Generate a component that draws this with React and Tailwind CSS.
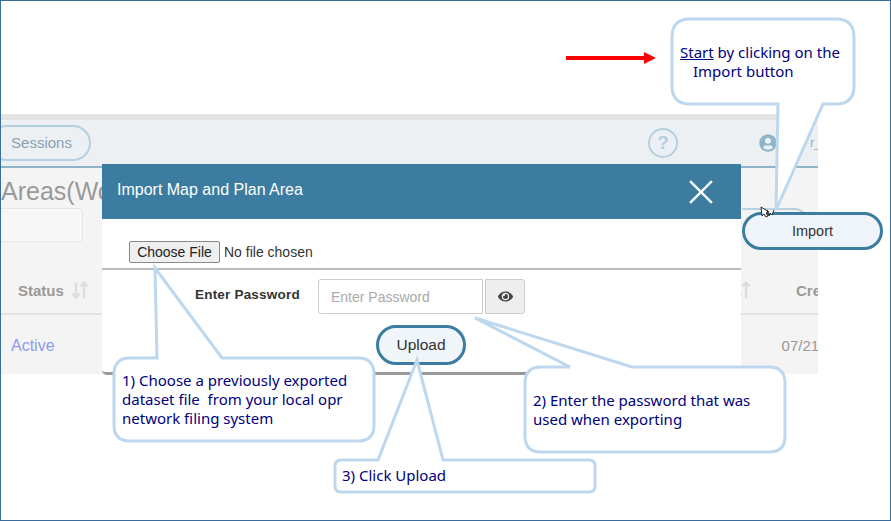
import React from "react";
import { FaEye, FaUserCircle } from "react-icons/fa";

const SortArrows = ({ className }) => (
  <svg viewBox="0 0 18 18" className={className} fill="none" stroke="currentColor" strokeWidth="2.4">
    <path d="M5 1v15M1.5 12.5 5 16.5l3.5-4" />
    <path d="M13 17V2M9.5 5.5 13 1.5l3.5 4" />
  </svg>
);

const CalloutText = ({ className, children }) => (
  <div className={`absolute z-30 font-['Noto_Sans',sans-serif] text-[15px] leading-[19px] text-[#000080] ${className}`}>
    {children}
  </div>
);

const BackgroundPage = () => (
  <div className="w-[817px] h-[260px] overflow-hidden flex flex-col bg-[#f4f4f4] text-[#999] font-['Liberation_Sans',sans-serif]">
    <div className="h-1.5 bg-[#e3e3e3] shrink-0" />
    <div className="h-[48px] shrink-0 flex items-center bg-[#edf0f3] border-b-2 border-[#8fb3c8]">
      <div className="-ml-[12px] w-[102px] h-[36px] shrink-0 flex items-center justify-center rounded-full border-2 border-[#b4cfe0] text-[15px] text-[#8ba0b0] pl-[3px] pt-[1px]">
        Sessions
      </div>
      <div className="ml-[557px] w-[30px] h-[30px] shrink-0 rounded-full border-2 border-[#b4cfe0] flex items-center justify-center text-[19px] font-bold text-[#b4cfe0]">
        ?
      </div>
      <FaUserCircle className="ml-[81px] shrink-0 text-[#8fb3c8]" size={18} />
      <span className="ml-[33px] text-[13px] text-[#8fb3c8]">r_</span>
    </div>
    <div className="pt-[7px] text-[25px] leading-[32px] text-[#999]">Areas(Wo</div>
    <div className="mt-[1px] -ml-2 w-[90px] h-[34px] bg-[#f7f7f7] border border-[#e6e6e6] rounded" />
    <div className="mt-[38px] h-[35px] flex items-start border-b-2 border-[#e3e3e3] text-[15px] font-bold">
      <span className="ml-[17px] w-[52px] shrink-0">Status</span>
      <SortArrows className="ml-[1px] mt-[1px] w-[18px] h-[18px] shrink-0 text-[#ddd]" />
      <SortArrows className="ml-[644px] mt-[1px] w-[18px] h-[18px] shrink-0 text-[#ddd]" />
      <span className="ml-[45px]">Cre</span>
    </div>
    <div className="flex items-center pt-[19px] text-[16px]">
      <span className="ml-[10px] text-[#8b9bee]">Active</span>
      <span className="ml-[727px] text-[15px] text-[#999]">07/21</span>
    </div>
  </div>
);

const ImportModal = () => (
  <div className="absolute z-10 left-[101px] top-[163px] w-[639px] h-[211px] flex flex-col bg-white rounded-b-[5px] border-b-[3px] border-[#999] font-['Liberation_Sans',sans-serif]">
    <div className="h-[55px] shrink-0 flex items-center justify-between bg-[#3b7ca0] pl-[15px] pr-[28px] text-white text-[16px]">
      <span className="pb-[3px]">Import Map and Plan Area</span>
      <svg viewBox="0 0 22 22" className="w-[24px] h-[24px]" stroke="currentColor" strokeWidth="2.2">
        <path d="M1 1l20 20M21 1 1 21" />
      </svg>
    </div>
    <div className="h-[51px] shrink-0 flex items-start pt-[22px] pl-[27px] border-b-2 border-[#bbb] text-[14px] text-[#333]">
      <button className="w-[91px] h-[22px] bg-[#efefef] border border-[#8a8a8a] rounded-[2px] text-[14px] leading-none text-[#222]">
        Choose File
      </button>
      <span className="ml-[4px] leading-[22px]">No file chosen</span>
    </div>
    <div className="flex items-start mt-[9px] ml-[93px]">
      <span className="w-[123px] pt-[6px] text-[13.5px] font-bold tracking-[0.2px] text-[#333]">Enter Password</span>
      <input
        placeholder="Enter Password"
        className="w-[165px] h-[35px] px-3 bg-white border border-[#ccc] rounded-l-[3px] text-[14px] placeholder:text-[#aaa] outline-none"
      />
      <div className="ml-[2px] w-[40px] h-[35px] flex items-center justify-center bg-[#eee] border border-[#ccc] rounded-r-[3px] text-[#444]">
        <FaEye size={15} />
      </div>
    </div>
    <div className="mt-[11px] flex justify-center pr-[1px]">
      <div className="w-[90px] h-[40px] flex items-center justify-center rounded-full border-[3px] border-[#3b7ca0] bg-[#f0f5fa] text-[15.5px] text-[#333]">
        Upload
      </div>
    </div>
  </div>
);

export default function App() {
  return (
    <div className="relative w-[891px] h-[521px] overflow-hidden bg-white border border-[#3a6d9c] pt-[113px]">
      <BackgroundPage />
      <ImportModal />

      {/* behind the Import button */}
      <div className="absolute z-10 left-[741px] top-[207px] w-[65px] h-[12px] border-t-2 border-r-2 border-[#b9d0e0] rounded-tr-[12px]" />
      <div className="absolute z-10 left-[741px] top-[211px] w-[141px] h-[38px] flex items-center justify-center rounded-full border-[3px] border-[#3b7ca0] bg-[#eff4fa] pt-[2px] text-[14.5px] text-[#333] font-['Liberation_Sans',sans-serif]">
        Import
      </div>

      {/* callouts and arrow */}
      <svg viewBox="0 0 891 521" className="absolute z-20 -left-px -top-px w-[891px] h-[521px] pointer-events-none">
        <g fill="#fff" stroke="#bdd7ee" strokeWidth="3" strokeLinejoin="miter">
          <path d="M690 19H836Q854 19 854 37V86Q854 104 836 104H823L776 210 778 104H690Q672 104 672 86V37Q672 19 690 19Z" />
          <path d="M130 358H157L155 268 222 358H358Q374 358 374 374V425Q374 441 358 441H130Q114 441 114 425V374Q114 358 130 358Z" />
          <path d="M541 367H570L475 318 632 367H769Q785 367 785 383V436Q785 452 769 452H541Q525 452 525 436V383Q525 367 541 367Z" />
          <path d="M341 460H378L417 360 443 460H589Q595 460 595 466V486Q595 492 589 492H341Q335 492 335 486V466Q335 460 341 460Z" />
        </g>
        <path d="M566 56h78v-4l12 6-12 6v-4h-78z" fill="#f00" />
        <path d="M761 207l1 9 2-2 2 3 2-1-2-3 3-1zM767 210l2 6 1-3 2 2 2-5" fill="#fff" stroke="#222" strokeWidth="1" />
      </svg>

      <CalloutText className="left-[679px] top-[42px] w-[170px] leading-[18px]">
        <span className="underline">Start</span> by clicking on the
        <div className="pl-[13px]">Import button</div>
      </CalloutText>
      <CalloutText className="left-[121px] top-[370px] w-[245px]">
        1) Choose a previously exported dataset file&nbsp; from your local opr network filing system
      </CalloutText>
      <CalloutText className="left-[532px] top-[390px] w-[245px] leading-[18.500px]">
        2) Enter the password that was used when exporting
      </CalloutText>
      <CalloutText className="left-[341px] top-[465px] w-[240px]">3) Click Upload</CalloutText>
    </div>
  );
}
